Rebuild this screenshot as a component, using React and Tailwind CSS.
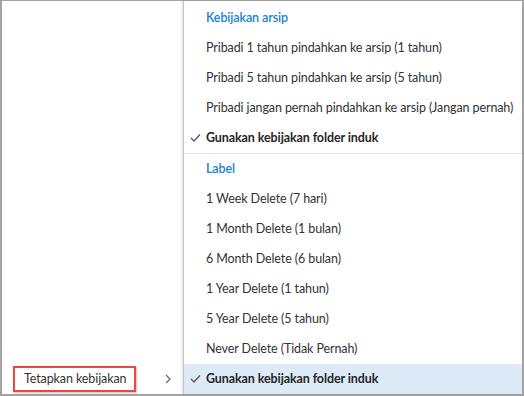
import React from 'react';

const archiveItems = [
  'Pribadi 1 tahun pindahkan ke arsip (1 tahun)',
  'Pribadi 5 tahun pindahkan ke arsip (5 tahun)',
  'Pribadi jangan pernah pindahkan ke arsip (Jangan pernah)',
];

const labelItems = [
  '1 Week Delete (7 hari)',
  '1 Month Delete (1 bulan)',
  '6 Month Delete (6 bulan)',
  '1 Year Delete (1 tahun)',
  '5 Year Delete (5 tahun)',
  'Never Delete (Tidak Pernah)',
];

const Check = () => (
  <svg width="11" height="9" viewBox="0 0 11 9" className="absolute left-[6px] top-1/2 -translate-y-1/2">
    <path d="M1 4.5 L4 7.5 L10 1" fill="none" stroke="#555" strokeWidth="1.3" />
  </svg>
);

const Row = ({ children, checked, active, bold }) => (
  <div
    className={`relative h-[30px] flex items-center pl-[22px] whitespace-nowrap ${active ? 'bg-[#dcebf7]' : ''} ${
      bold ? 'font-bold text-[#262626]' : 'text-[#333333]'
    }`}
  >
    {checked && <Check />}
    {children}
  </div>
);

const Header = ({ children }) => (
  <div className="h-[30px] flex items-center pl-[22px] text-[#1a7fd6] font-semibold whitespace-nowrap">{children}</div>
);

export default function App() {
  return (
    <div
      className="w-[524px] h-[396px] bg-white border-2 border-t border-[#a3a3a3] flex text-[12.5px] tracking-[-0.1px]"
      style={{ fontFamily: 'Lato, "Noto Sans", sans-serif' }}
    >
      {/* Parent menu */}
      <div className="w-[181px] shrink-0 flex flex-col justify-end">
        <div className="h-[30px] flex items-center justify-between pl-[11px] pr-[12px]">
          <div className="h-[26px] w-[123px] border-2 border-[#e8474a] flex items-center pl-[9px] text-[#333333] whitespace-nowrap shadow-[1px_1px_2px_rgba(0,0,0,0.25)]">
            Tetapkan kebijakan
          </div>
          <svg width="6" height="10" viewBox="0 0 6 10">
            <path d="M1 1 L5 5 L1 9" fill="none" stroke="#666" strokeWidth="1.2" />
          </svg>
        </div>
      </div>

      {/* Submenu */}
      <div className="flex-1 min-w-0 overflow-hidden border-l border-[#c4c4c4] shadow-[-1px_0_2px_rgba(0,0,0,0.12)] flex flex-col pt-[2px]">
        <Header>Kebijakan arsip</Header>
        {archiveItems.map((t) => (
          <Row key={t}>{t}</Row>
        ))}
        <Row checked bold>Gunakan kebijakan folder induk</Row>
        <div className="h-px shrink-0 bg-[#e3e3e3]" />
        <Header>Label</Header>
        {labelItems.map((t) => (
          <Row key={t}>{t}</Row>
        ))}
        <Row checked bold active>Gunakan kebijakan folder induk</Row>
      </div>
    </div>
  );
}
